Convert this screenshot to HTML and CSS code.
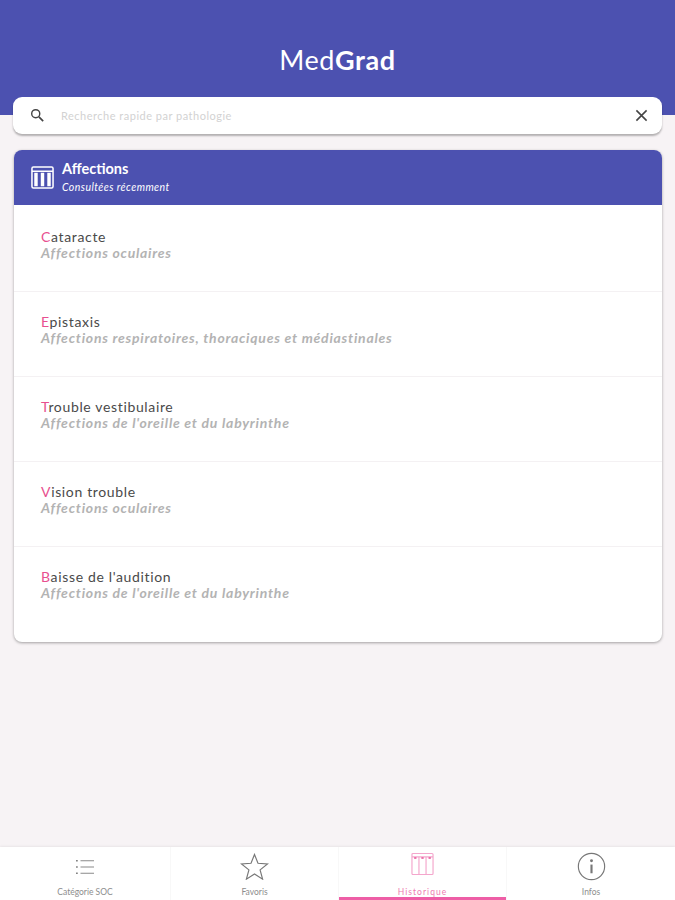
FILE: index.html
```html
<!DOCTYPE html>
<html lang="fr">
<head>
<meta charset="utf-8">
<title>MedGrad</title>
<link rel="stylesheet" href="styles.css">
</head>
<body>
<div class="app">
  <header class="hero">
    <h1 class="brand">Med<b>Grad</b></h1>
  </header>
  <div class="search">
    <svg class="search-icon" viewBox="0 0 24 24" width="17" height="17"><circle cx="9.5" cy="9.5" r="5.7" fill="none" stroke="#444" stroke-width="2"/><path d="M14 14l6 6" stroke="#444" stroke-width="2.4"/></svg>
    <span class="placeholder">Recherche rapide par pathologie</span>
    <svg class="clear-icon" viewBox="0 0 14 14" width="13" height="13"><path d="M1.5 1.5l11 11M12.5 1.5l-11 11" stroke="#444" stroke-width="1.7"/></svg>
  </div>
  <section class="card">
    <div class="card-head">
      <svg class="head-icon" viewBox="0 0 24 24" width="23" height="23"><rect x="1" y="1" width="22" height="22" rx="1.5" fill="none" stroke="#fff" stroke-width="1.6"/><path d="M1 5.5h22" stroke="#fff" stroke-width="1.4"/><path d="M5.2 7v14M12 7v14M18.8 7v14" stroke="#fff" stroke-width="3.6"/><path d="M5.2 3.2h.01M12 3.2h.01M18.8 3.2h.01" stroke="#fff" stroke-width="2"/></svg>
      <div>
        <div class="head-title">Affections</div>
        <div class="head-sub">Consultées récemment</div>
      </div>
    </div>
    <div class="rows">
      <div class="row"><div class="name"><span class="initial">C</span>ataracte</div><div class="cat">Affections oculaires</div></div>
      <div class="row"><div class="name"><span class="initial">E</span>pistaxis</div><div class="cat">Affections respiratoires, thoraciques et médiastinales</div></div>
      <div class="row"><div class="name"><span class="initial">T</span>rouble vestibulaire</div><div class="cat">Affections de l'oreille et du labyrinthe</div></div>
      <div class="row"><div class="name"><span class="initial">V</span>ision trouble</div><div class="cat">Affections oculaires</div></div>
      <div class="row last"><div class="name"><span class="initial">B</span>aisse de l'audition</div><div class="cat">Affections de l'oreille et du labyrinthe</div></div>
    </div>
  </section>
  <nav class="tabs">
    <div class="tab">
      <div class="tab-icon"><svg viewBox="0 0 22 20" width="20" height="18"><path d="M6 3h15M6 10h15M6 17h15" stroke="#8a8a8a" stroke-width="1.2"/><path d="M2 2.2v1.6M2 9.2v1.6M2 16.2v1.6" stroke="#777" stroke-width="1.8"/></svg></div>
      <span>Catégorie SOC</span>
    </div>
    <div class="tab">
      <div class="tab-icon"><svg viewBox="0 0 30 28" width="29" height="27"><path d="M15 1.5l3.6 9.2 9.9.6-7.7 6.2 2.6 9.6L15 21.7l-8.4 5.4 2.6-9.6-7.7-6.2 9.9-.6z" fill="none" stroke="#777" stroke-width="1.2"/></svg></div>
      <span>Favoris</span>
    </div>
    <div class="tab active">
      <div class="tab-icon raised"><svg viewBox="0 0 24 24" width="23" height="24"><rect x="1" y="1" width="22" height="22" rx="1" fill="none" stroke="#f4a6cc" stroke-width="1.2"/><path d="M1 4.5h22M8.3 4.5v18.5M15.7 4.5v18.5" stroke="#f4a6cc" stroke-width="1.2"/><path d="M4.5 5v1.6M12 5v1.6M19.5 5v1.6" stroke="#e84f97" stroke-width="2.4"/></svg></div>
      <span>Historique</span>
    </div>
    <div class="tab">
      <div class="tab-icon"><svg viewBox="0 0 30 30" width="29" height="29"><circle cx="15" cy="15" r="13.6" fill="none" stroke="#777" stroke-width="1.2"/><circle cx="15" cy="9" r="1.5" fill="#777"/><path d="M15 13v9" stroke="#777" stroke-width="2.2"/></svg></div>
      <span>Infos</span>
    </div>
  </nav>
</div>
</body>
</html>
```
FILE: styles.css
```css
* { box-sizing: border-box; }
html, body { margin: 0; padding: 0; }
body { font-family: "Lato", "Liberation Sans", sans-serif; background: #f7f3f5; }
.app { width: 675px; height: 900px; display: flex; flex-direction: column; overflow: hidden; }
.hero { height: 115px; margin-bottom: -18px; flex: none; background: #4c51b0; padding-top: 43px; text-align: center; }
.brand { margin: 0; color: #fff; font-size: 27px; line-height: 34px; font-weight: 400; letter-spacing: .6px; }
.brand b { font-weight: 700; }
.search { position: relative; margin: 0 13px; height: 37px; flex: none; background: #fff; border-radius: 9px; box-shadow: 0 2px 2px rgba(0,0,0,.28); display: flex; align-items: center; padding: 0 14px 0 16px; }
.search-icon { flex: none; }
.placeholder { margin-left: 15px; flex: 1; color: #d2d2d2; font-size: 11px; letter-spacing: .5px; }
.clear-icon { flex: none; }
.card { margin: 16px 13px 0 14px; height: 492px; flex: none; background: #fff; border-radius: 8px; overflow: hidden; box-shadow: 0 1px 3px rgba(0,0,0,.35); }
.card-head { height: 55px; background: #4c51b0; color: #fff; display: flex; align-items: center; gap: 8px; padding: 0 0 0 17px; }
.head-title { font-size: 14.5px; font-weight: 700; line-height: 18px; }
.head-sub { font-size: 10.5px; font-style: italic; line-height: 16px; margin-top: 1px; letter-spacing: .45px; }
.rows { padding-top: 2px; }
.row { height: 85px; padding: 21px 0 0 27px; border-bottom: 1px solid #f4f1f3; }
.row.last { border-bottom: 0; }
.name { font-size: 14px; line-height: 18px; color: #4a4a4a; letter-spacing: .65px; }
.initial { color: #e84f8f; }
.cat { font-size: 14px; line-height: 14px; font-weight: 700; font-style: italic; color: #b3b3b3; letter-spacing: .75px; }
.tabs { margin-top: auto; height: 53px; flex: none; background: #fff; display: grid; grid-template-columns: 170px 168px 168px 1fr; box-shadow: 0 -1px 2px rgba(0,0,0,.06); }
.tab { display: flex; flex-direction: column; align-items: center; padding-top: 1px; font-size: 8.5px; line-height: 14px; color: #8d8d8d; border-left: 1px solid #f8f8f8; position: relative; }
.tab:first-child { border-left: 0; }
.tab-icon { height: 37px; display: flex; align-items: center; justify-content: center; }
.tab-icon.raised { padding-bottom: 6px; }
.tab.active { color: #ee7bb2; letter-spacing: 1.05px; }
.tab.active::after { content: ""; position: absolute; left: 0; right: 0; bottom: 0; height: 3px; background: #ee5ea6; }
```
